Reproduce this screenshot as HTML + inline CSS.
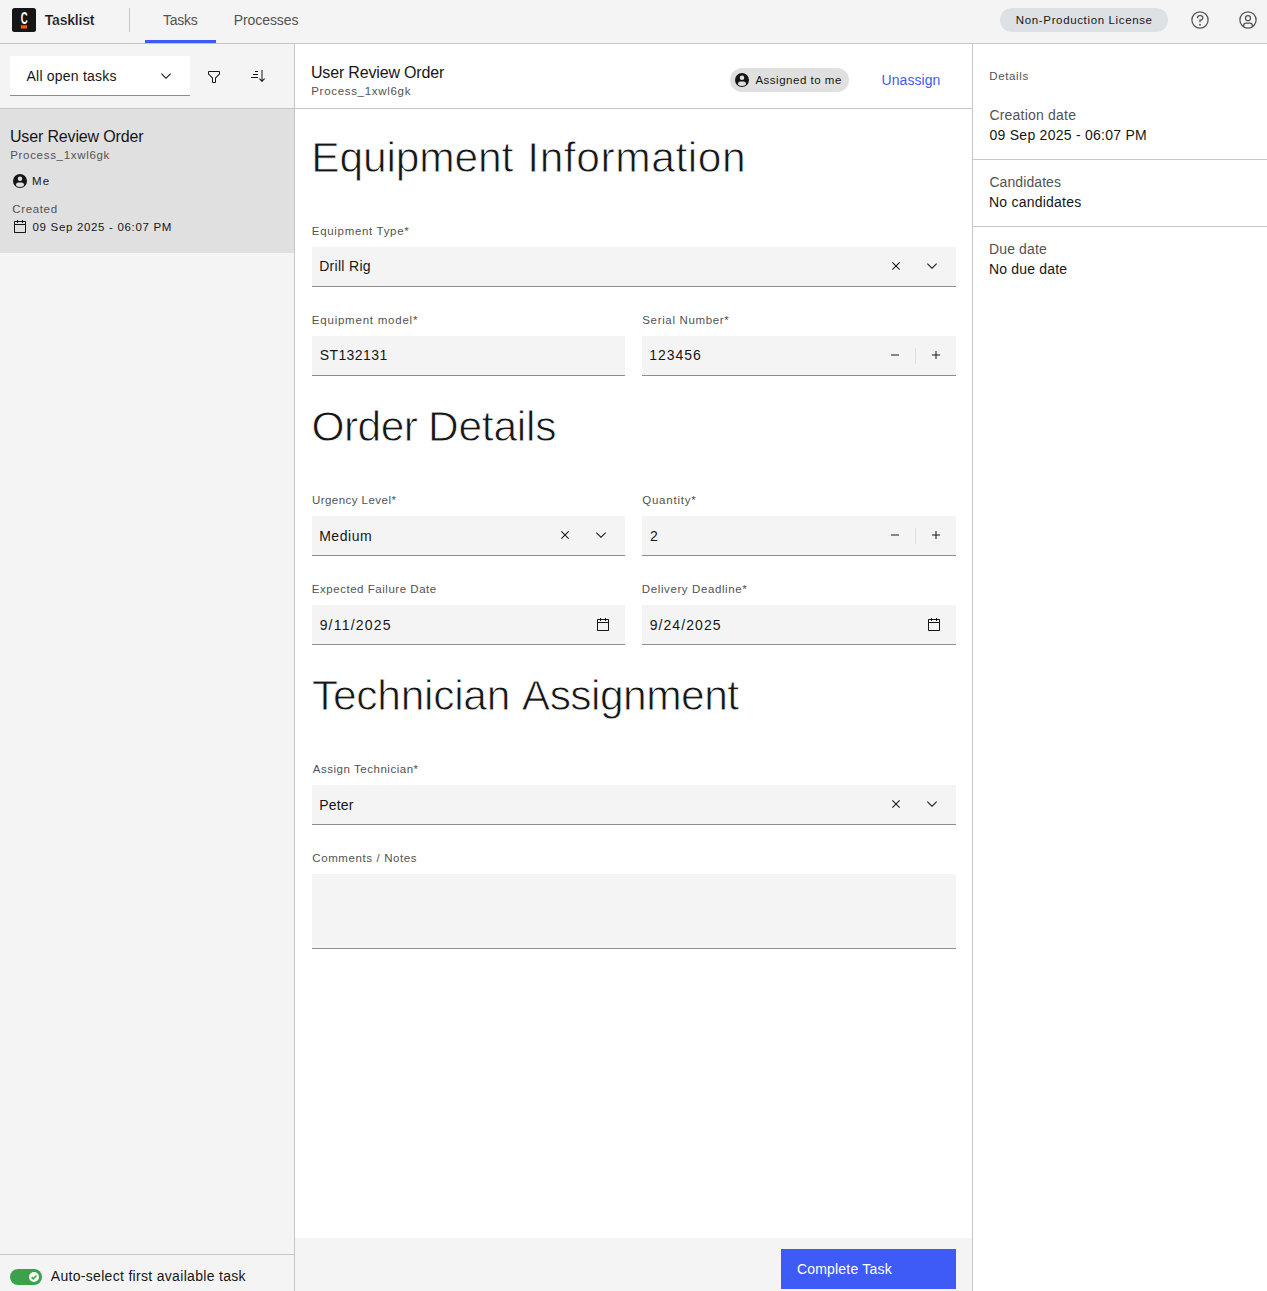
<!DOCTYPE html>
<html lang="en"><head><meta charset="utf-8"><title>Tasklist</title>
<style>
html,body{margin:0;padding:0}
body{width:1267px;height:1291px;position:relative;overflow:hidden;background:#fff;font-family:"Liberation Sans",sans-serif;-webkit-font-smoothing:antialiased}
.t{position:absolute;line-height:1;white-space:nowrap}
h1{margin:0;padding:0;font-weight:400;font-size:0;line-height:0}
.b{position:absolute}
.i{position:absolute;display:block;overflow:visible}
.h{-webkit-text-stroke:0.8px #fff}
</style></head><body>
<div class="b" style="left:0px;top:0px;width:1267px;height:43px;background:#f4f4f4;"></div>
<div class="b" style="left:0px;top:43px;width:1267px;height:1px;background:#c6c6c6;"></div>
<div class="b" style="left:0px;top:44px;width:294px;height:1247px;background:#f4f4f4;"></div>
<div class="b" style="left:294px;top:44px;width:1px;height:1247px;background:#c6c6c6;"></div>
<div class="b" style="left:972px;top:44px;width:1px;height:1247px;background:#c6c6c6;"></div>
<header>
<svg class="i" style="left:12px;top:8px" width="24" height="24" viewBox="0 0 24 24"><rect width="24" height="24" rx="2.5" fill="#161616"/><text x="0" y="0" transform="translate(8.75 15.9) scale(0.58 1)" font-family="Liberation Sans, sans-serif" font-weight="700" font-size="16.5" fill="#fff">C</text><rect x="8.8" y="17.3" width="6.3" height="3.2" fill="#fc5d0d"/></svg>
<span class="t " style="left:44.84px;top:13.15px;font-size:14px;color:#161616;letter-spacing:-0.224px;font-weight:700;-webkit-text-stroke:0.2px #f4f4f4;">Tasklist</span>
<div class="b" style="left:129px;top:8px;width:1px;height:24px;background:#c6c6c6;"></div>
<span class="t " style="left:162.99px;top:13.15px;font-size:14px;color:#525252;letter-spacing:-0.241px;">Tasks</span>
<div class="b" style="left:145px;top:40px;width:71px;height:3px;background:#3f5bf7;"></div>
<span class="t " style="left:233.75px;top:13.15px;font-size:14px;color:#525252;letter-spacing:-0.075px;">Processes</span>
<div class="b" style="left:1000px;top:8px;width:168px;height:24px;background:#dde1e6;border-radius:12px;"></div>
<span class="t " style="left:1015.86px;top:15.30px;font-size:11.5px;color:#161616;letter-spacing:0.639px;">Non-Production License</span>
<svg class="i" style="left:1190px;top:10px" width="20" height="20" viewBox="0 0 32 32" fill="#525252"><path d="M16,2A14,14,0,1,0,30,16,14,14,0,0,0,16,2Zm0,26A12,12,0,1,1,28,16,12,12,0,0,1,16,28Z"/><circle cx="16" cy="23.5" r="1.5"/><path d="M17,8H15.5A4.49,4.49,0,0,0,11,12.5V13h2v-.5A2.5,2.5,0,0,1,15.5,10H17a2.5,2.5,0,0,1,0,5H15v4.5h2V17a4.5,4.5,0,0,0,0-9Z"/></svg>
<svg class="i" style="left:1238px;top:10px" width="20" height="20" viewBox="0 0 32 32" fill="#525252"><path d="M16,8a5,5,0,1,0,5,5A5,5,0,0,0,16,8Zm0,8a3,3,0,1,1,3-3A3.0034,3.0034,0,0,1,16,16Z"/><path d="M16,2A14,14,0,1,0,30,16,14.0158,14.0158,0,0,0,16,2ZM10,26.3765V25a3.0033,3.0033,0,0,1,3-3h6a3.0033,3.0033,0,0,1,3,3v1.3765a11.8989,11.8989,0,0,1-12,0Zm13.9925-1.4507A5.0016,5.0016,0,0,0,19,20H13a5.0016,5.0016,0,0,0-4.9925,4.9258,12,12,0,1,1,15.985,0Z"/></svg>
</header>
<aside>
<div class="b" style="left:10px;top:56px;width:180px;height:39px;background:#fff;"></div>
<div class="b" style="left:10px;top:95px;width:180px;height:1px;background:#8d8d8d;"></div>
<span class="t " style="left:26.57px;top:69.05px;font-size:14px;color:#161616;letter-spacing:0.214px;">All open tasks</span>
<svg class="i" style="left:158px;top:68px" width="16" height="16" viewBox="0 0 32 32" fill="#161616"><path d="M16 22L6 12l1.4-1.4 8.6 8.6 8.6-8.6L26 12z"/></svg>
<svg class="i" style="left:206px;top:69px" width="16" height="16" viewBox="0 0 32 32" fill="#161616"><path d="M18,28H14a2,2,0,0,1-2-2V18.41L4.59,11A2,2,0,0,1,4,9.59V6A2,2,0,0,1,6,4H26a2,2,0,0,1,2,2V9.59A2,2,0,0,1,27.41,11L20,18.41V26A2,2,0,0,1,18,28ZM6,6V9.59l8,8V26h4V17.59l8-8V6Z"/></svg>
<svg class="i" style="left:250px;top:68px" width="16" height="16" viewBox="0 0 32 32" fill="#161616"><path d="M18 22l1.414-1.414L23 24.172V4h2v20.172l3.586-3.586L30 22l-6 6zM10 6h6v2h-6zM6 12h10v2H6zM2 18h14v2H2z"/></svg>
<div class="b" style="left:0px;top:108px;width:294px;height:1px;background:#c6c6c6;"></div>
<div class="b" style="left:0px;top:109px;width:294px;height:144px;background:#e0e0e0;"></div>
<span class="t " style="left:9.97px;top:128.66px;font-size:16px;color:#161616;letter-spacing:-0.158px;">User Review Order</span>
<span class="t " style="left:10.26px;top:150.40px;font-size:11.5px;color:#525252;letter-spacing:0.682px;">Process_1xwl6gk</span>
<svg class="i" style="left:12px;top:173px" width="16" height="16" viewBox="0 0 32 32" fill="#161616"><path d="M16,2A14,14,0,1,0,30,16,14,14,0,0,0,16,2Zm0,5a4.5,4.5,0,1,1-4.5,4.5A4.49,4.49,0,0,1,16,7Zm8,17.92a11.93,11.93,0,0,1-16,0v-.58A5.2,5.2,0,0,1,13,19h6a5.21,5.21,0,0,1,5,5.31Z"/></svg>
<span class="t " style="left:32.06px;top:176.40px;font-size:11.5px;color:#161616;letter-spacing:1.079px;">Me</span>
<span class="t " style="left:12.32px;top:203.70px;font-size:11.5px;color:#525252;letter-spacing:0.636px;">Created</span>
<svg class="i" style="left:11.6px;top:218.6px" width="16" height="16" viewBox="0 0 32 32" fill="#161616"><path d="M26,4h-4V2h-2v2h-8V2h-2v2H6C4.9,4,4,4.9,4,6v20c0,1.1,0.9,2,2,2h20c1.1,0,2-0.9,2-2V6C28,4.9,27.1,4,26,4z M26,26H6V12h20V26z M26,10H6V6h4v2h2V6h8v2h2V6h4V10z"/></svg>
<span class="t " style="left:32.55px;top:222.00px;font-size:11.5px;color:#161616;letter-spacing:0.673px;">09 Sep 2025 - 06:07 PM</span>
<div class="b" style="left:0px;top:1254px;width:294px;height:1px;background:#c6c6c6;"></div>
<div class="b" style="left:10px;top:1269px;width:32px;height:16px;background:#3ba24b;border-radius:8px;"></div>
<svg class="i" style="left:29px;top:1272px" width="10" height="10" viewBox="0 0 10 10"><circle cx="5" cy="5" r="5" fill="#fff"/><path d="M2.6 5.1l1.7 1.7 3.2-3.4" fill="none" stroke="#3ba24b" stroke-width="1.5"/></svg>
<span class="t " style="left:50.77px;top:1268.85px;font-size:14px;color:#161616;letter-spacing:0.310px;">Auto-select first available task</span>
</aside>
<main>
<span class="t " style="left:310.97px;top:64.56px;font-size:16px;color:#161616;letter-spacing:-0.171px;">User Review Order</span>
<span class="t " style="left:311.26px;top:86.00px;font-size:11.5px;color:#525252;letter-spacing:0.689px;">Process_1xwl6gk</span>
<div class="b" style="left:730px;top:68px;width:119px;height:24px;background:#e0e0e0;border-radius:12px;"></div>
<svg class="i" style="left:734px;top:72px" width="16" height="16" viewBox="0 0 32 32" fill="#161616"><path d="M16,2A14,14,0,1,0,30,16,14,14,0,0,0,16,2Zm0,5a4.5,4.5,0,1,1-4.5,4.5A4.49,4.49,0,0,1,16,7Zm8,17.92a11.93,11.93,0,0,1-16,0v-.58A5.2,5.2,0,0,1,13,19h6a5.21,5.21,0,0,1,5,5.31Z"/></svg>
<span class="t " style="left:755.38px;top:75.30px;font-size:11.5px;color:#161616;letter-spacing:0.513px;">Assigned to me</span>
<span class="t " style="left:881.52px;top:72.55px;font-size:14px;color:#3f5bf7;letter-spacing:0.061px;">Unassign</span>
<div class="b" style="left:295px;top:108px;width:677px;height:1px;background:#c6c6c6;"></div>
<h1><span class="t h" style="left:311.21px;top:137.22px;font-size:42.5px;color:#161616;letter-spacing:-0.123px;">Equipment</span> <span class="t h" style="left:527.28px;top:137.22px;font-size:42.5px;color:#161616;letter-spacing:0.578px;">Information</span></h1>
<h1><span class="t h" style="left:311.39px;top:406.22px;font-size:42.5px;color:#161616;letter-spacing:-0.504px;">Order</span> <span class="t h" style="left:428.01px;top:406.22px;font-size:42.5px;color:#161616;letter-spacing:-0.247px;">Details</span></h1>
<h1><span class="t h" style="left:312.05px;top:675.22px;font-size:42.5px;color:#161616;letter-spacing:-0.289px;">Technician</span> <span class="t h" style="left:521.82px;top:675.22px;font-size:42.5px;color:#161616;letter-spacing:-0.528px;">Assignment</span></h1>
<span class="t " style="left:311.86px;top:226.10px;font-size:11.5px;color:#525252;letter-spacing:0.675px;">Equipment Type*</span>
<div class="b" style="left:312px;top:247px;width:644px;height:39px;background:#f4f4f4;"></div>
<div class="b" style="left:312px;top:286px;width:644px;height:1px;background:#8d8d8d;"></div>
<svg class="i" style="left:888px;top:258px" width="16" height="16" viewBox="0 0 32 32" fill="#161616"><path d="M17.4141 16L24 9.4141 22.5859 8 16 14.5859 9.4143 8 8 9.4141 14.5859 16 8 22.5859 9.4143 24 16 17.4141 22.5859 24 24 22.5859 17.4141 16z"/></svg>
<svg class="i" style="left:924px;top:257.5px" width="16" height="16" viewBox="0 0 32 32" fill="#161616"><path d="M16 22L6 12l1.4-1.4 8.6 8.6 8.6-8.6L26 12z"/></svg>
<span class="t " style="left:319.15px;top:259.45px;font-size:14px;color:#161616;letter-spacing:0.306px;">Drill Rig</span>
<span class="t " style="left:311.86px;top:315.20px;font-size:11.5px;color:#525252;letter-spacing:0.770px;">Equipment model*</span>
<div class="b" style="left:312px;top:336px;width:313px;height:39px;background:#f4f4f4;"></div>
<div class="b" style="left:312px;top:375px;width:313px;height:1px;background:#8d8d8d;"></div>
<span class="t " style="left:319.66px;top:348.45px;font-size:14px;color:#161616;letter-spacing:0.416px;">ST132131</span>
<span class="t " style="left:642.28px;top:315.20px;font-size:11.5px;color:#525252;letter-spacing:0.656px;">Serial Number*</span>
<div class="b" style="left:642px;top:336px;width:314px;height:39px;background:#f4f4f4;"></div>
<div class="b" style="left:642px;top:375px;width:314px;height:1px;background:#8d8d8d;"></div>
<svg class="i" style="left:887px;top:347px" width="16" height="16" viewBox="0 0 32 32" fill="#161616"><path d="M8 15H24V17H8z"/></svg>
<div class="b" style="left:915px;top:347.5px;width:1px;height:16px;background:#e0e0e0;"></div>
<svg class="i" style="left:928px;top:347px" width="16" height="16" viewBox="0 0 32 32" fill="#161616"><path d="M17 15L17 8 15 8 15 15 8 15 8 17 15 17 15 24 17 24 17 17 24 17 24 15z"/></svg>
<span class="t " style="left:649.23px;top:348.45px;font-size:14px;color:#161616;letter-spacing:0.993px;">123456</span>
<span class="t " style="left:311.91px;top:495.20px;font-size:11.5px;color:#525252;letter-spacing:0.460px;">Urgency Level*</span>
<div class="b" style="left:312px;top:516px;width:313px;height:39px;background:#f4f4f4;"></div>
<div class="b" style="left:312px;top:555px;width:313px;height:1px;background:#8d8d8d;"></div>
<svg class="i" style="left:557px;top:527px" width="16" height="16" viewBox="0 0 32 32" fill="#161616"><path d="M17.4141 16L24 9.4141 22.5859 8 16 14.5859 9.4143 8 8 9.4141 14.5859 16 8 22.5859 9.4143 24 16 17.4141 22.5859 24 24 22.5859 17.4141 16z"/></svg>
<svg class="i" style="left:593px;top:526.5px" width="16" height="16" viewBox="0 0 32 32" fill="#161616"><path d="M16 22L6 12l1.4-1.4 8.6 8.6 8.6-8.6L26 12z"/></svg>
<span class="t " style="left:319.15px;top:529.45px;font-size:14px;color:#161616;letter-spacing:0.536px;">Medium</span>
<span class="t " style="left:642.26px;top:495.20px;font-size:11.5px;color:#525252;letter-spacing:0.765px;">Quantity*</span>
<div class="b" style="left:642px;top:516px;width:314px;height:39px;background:#f4f4f4;"></div>
<div class="b" style="left:642px;top:555px;width:314px;height:1px;background:#8d8d8d;"></div>
<svg class="i" style="left:887px;top:527px" width="16" height="16" viewBox="0 0 32 32" fill="#161616"><path d="M8 15H24V17H8z"/></svg>
<div class="b" style="left:915px;top:527.5px;width:1px;height:16px;background:#e0e0e0;"></div>
<svg class="i" style="left:928px;top:527px" width="16" height="16" viewBox="0 0 32 32" fill="#161616"><path d="M17 15L17 8 15 8 15 15 8 15 8 17 15 17 15 24 17 24 17 17 24 17 24 15z"/></svg>
<span class="t " style="left:649.90px;top:529.45px;font-size:14px;color:#161616;">2</span>
<span class="t " style="left:311.86px;top:584.30px;font-size:11.5px;color:#525252;letter-spacing:0.529px;">Expected Failure Date</span>
<div class="b" style="left:312px;top:605px;width:313px;height:39px;background:#f4f4f4;"></div>
<div class="b" style="left:312px;top:644px;width:313px;height:1px;background:#8d8d8d;"></div>
<svg class="i" style="left:595px;top:617px" width="16" height="16" viewBox="0 0 32 32" fill="#161616"><path d="M26,4h-4V2h-2v2h-8V2h-2v2H6C4.9,4,4,4.9,4,6v20c0,1.1,0.9,2,2,2h20c1.1,0,2-0.9,2-2V6C28,4.9,27.1,4,26,4z M26,26H6V12h20V26z M26,10H6V6h4v2h2V6h8v2h2V6h4V10z"/></svg>
<span class="t " style="left:319.64px;top:618.45px;font-size:14px;color:#161616;letter-spacing:1.213px;">9/11/2025</span>
<span class="t " style="left:641.86px;top:584.30px;font-size:11.5px;color:#525252;letter-spacing:0.602px;">Delivery Deadline*</span>
<div class="b" style="left:642px;top:605px;width:314px;height:39px;background:#f4f4f4;"></div>
<div class="b" style="left:642px;top:644px;width:314px;height:1px;background:#8d8d8d;"></div>
<svg class="i" style="left:926px;top:617px" width="16" height="16" viewBox="0 0 32 32" fill="#161616"><path d="M26,4h-4V2h-2v2h-8V2h-2v2H6C4.9,4,4,4.9,4,6v20c0,1.1,0.9,2,2,2h20c1.1,0,2-0.9,2-2V6C28,4.9,27.1,4,26,4z M26,26H6V12h20V26z M26,10H6V6h4v2h2V6h8v2h2V6h4V10z"/></svg>
<span class="t " style="left:649.64px;top:618.45px;font-size:14px;color:#161616;letter-spacing:1.083px;">9/24/2025</span>
<span class="t " style="left:312.78px;top:764.30px;font-size:11.5px;color:#525252;letter-spacing:0.529px;">Assign Technician*</span>
<div class="b" style="left:312px;top:785px;width:644px;height:39px;background:#f4f4f4;"></div>
<div class="b" style="left:312px;top:824px;width:644px;height:1px;background:#8d8d8d;"></div>
<svg class="i" style="left:888px;top:796px" width="16" height="16" viewBox="0 0 32 32" fill="#161616"><path d="M17.4141 16L24 9.4141 22.5859 8 16 14.5859 9.4143 8 8 9.4141 14.5859 16 8 22.5859 9.4143 24 16 17.4141 22.5859 24 24 22.5859 17.4141 16z"/></svg>
<svg class="i" style="left:924px;top:795.5px" width="16" height="16" viewBox="0 0 32 32" fill="#161616"><path d="M16 22L6 12l1.4-1.4 8.6 8.6 8.6-8.6L26 12z"/></svg>
<span class="t " style="left:319.15px;top:798.45px;font-size:14px;color:#161616;letter-spacing:0.205px;">Peter</span>
<span class="t " style="left:312.22px;top:853.20px;font-size:11.5px;color:#525252;letter-spacing:0.612px;">Comments / Notes</span>
<div class="b" style="left:312px;top:874px;width:644px;height:74px;background:#f4f4f4;"></div>
<div class="b" style="left:312px;top:948px;width:644px;height:1px;background:#8d8d8d;"></div>
<div class="b" style="left:295px;top:1238px;width:677px;height:53px;background:#f4f4f4;"></div>
<div class="b" style="left:781px;top:1249px;width:175px;height:40px;background:#3f5bf7;"></div>
<span class="t " style="left:796.89px;top:1262.15px;font-size:14px;color:#fff;letter-spacing:0.204px;">Complete Task</span>
</main>
<aside>
<span class="t " style="left:989.16px;top:71.00px;font-size:11.5px;color:#525252;letter-spacing:0.668px;">Details</span>
<span class="t " style="left:989.39px;top:108.05px;font-size:14px;color:#525252;letter-spacing:0.207px;">Creation date</span>
<span class="t " style="left:989.55px;top:127.95px;font-size:14px;color:#161616;letter-spacing:0.254px;">09 Sep 2025 - 06:07 PM</span>
<div class="b" style="left:973px;top:159px;width:294px;height:1px;background:#c6c6c6;"></div>
<span class="t " style="left:989.39px;top:175.05px;font-size:14px;color:#525252;letter-spacing:0.088px;">Candidates</span>
<span class="t " style="left:988.95px;top:194.75px;font-size:14px;color:#161616;letter-spacing:0.229px;">No candidates</span>
<div class="b" style="left:973px;top:226px;width:294px;height:1px;background:#c6c6c6;"></div>
<span class="t " style="left:988.95px;top:242.05px;font-size:14px;color:#525252;letter-spacing:0.150px;">Due date</span>
<span class="t " style="left:988.95px;top:262.05px;font-size:14px;color:#161616;letter-spacing:0.189px;">No due date</span>
</aside>
</body></html>
